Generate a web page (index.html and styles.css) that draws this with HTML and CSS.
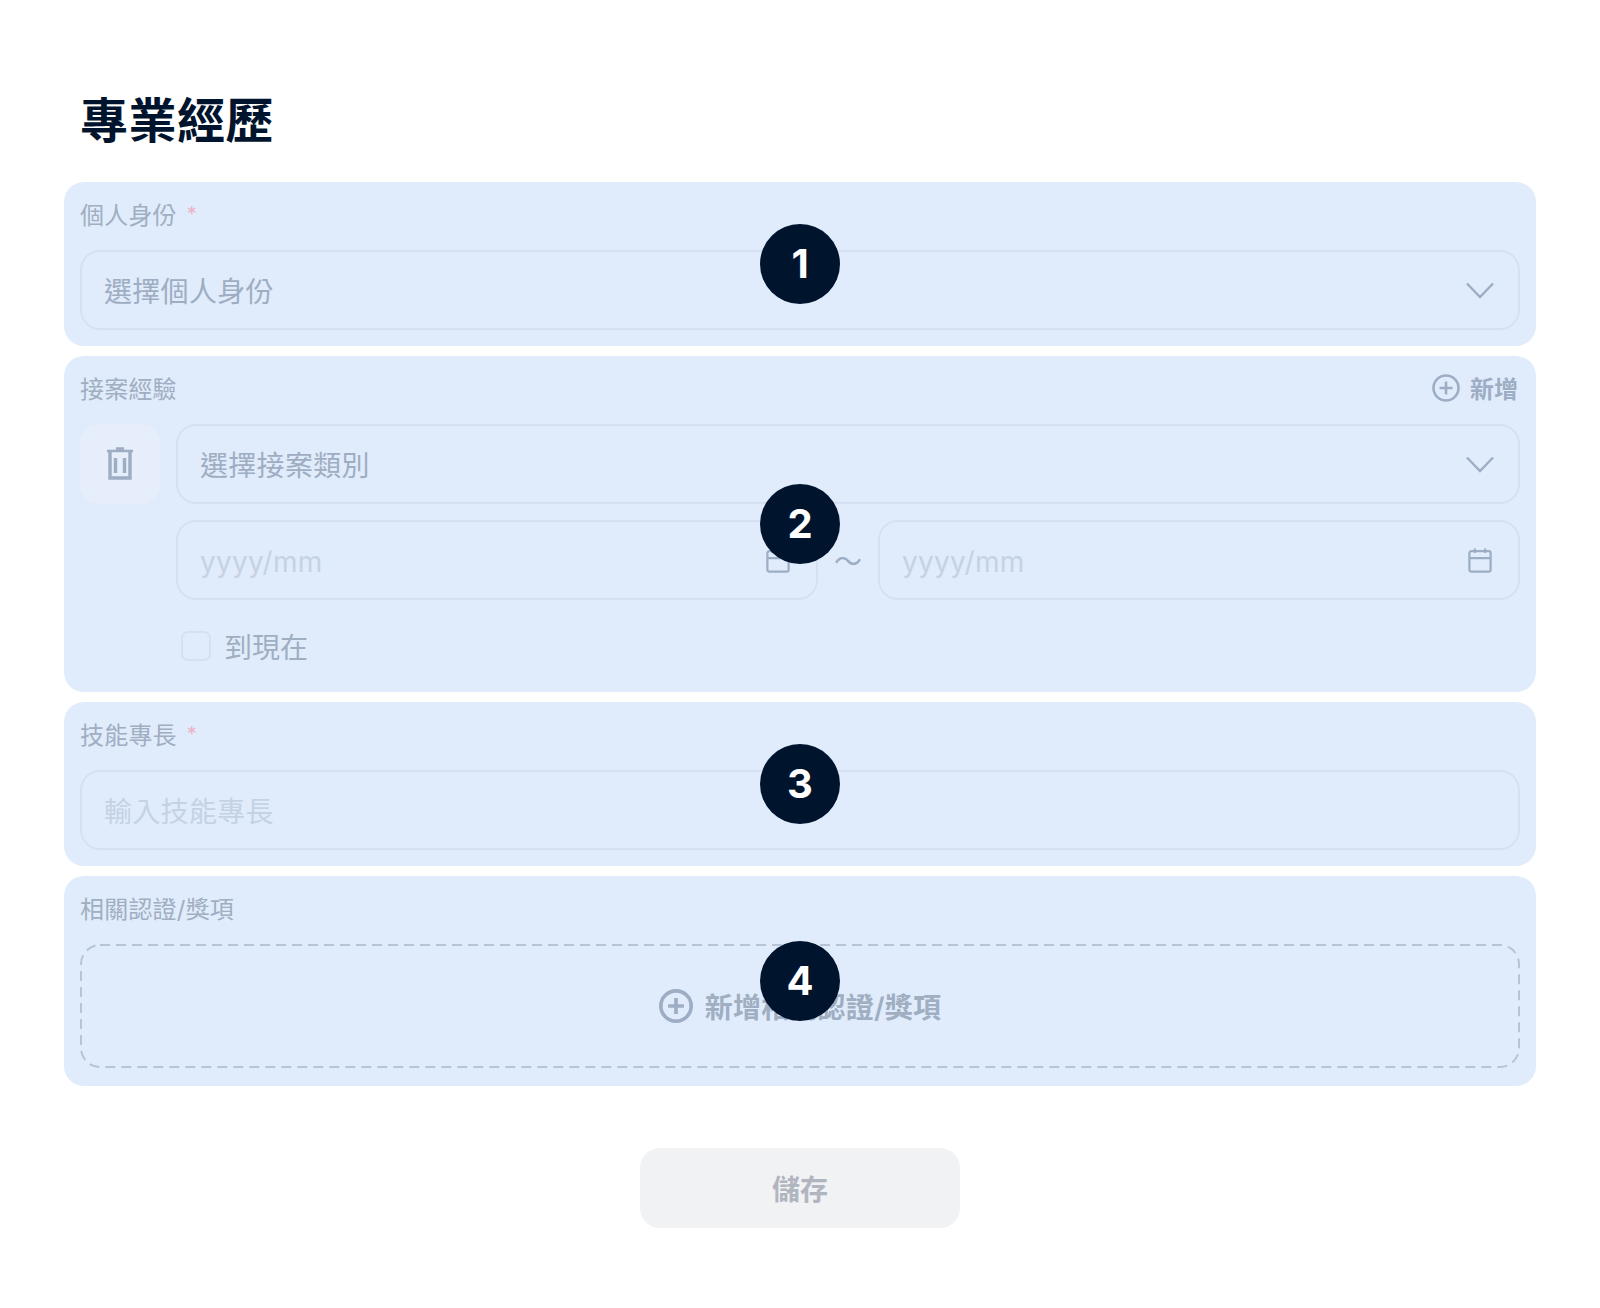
FILE: index.html
```html
<!DOCTYPE html>
<html lang="zh-Hant">
<head>
  <meta charset="UTF-8">
  <meta name="viewport" content="width=device-width, initial-scale=1.0">
  <title>專業經歷</title>
  <link rel="stylesheet" href="styles.css">
</head>
<body>
  <main class="page">
    <h1>專業經歷</h1>

    <div class="sections">
      <section class="block">
        <div class="label-row">
          <span class="label">個人身份<span class="req">*</span></span>
        </div>
        <div class="field">
          <span class="value">選擇個人身份</span>
          <svg class="chevron" viewBox="0 0 28 18"><path d="M1 1.500 14 15 27 1.500"/></svg>
        </div>
        <span class="marker">1</span>
      </section>

      <section class="block">
        <div class="label-row">
          <span class="label">接案經驗</span>
          <span class="add-link">
            <svg class="plus" viewBox="0 0 28 28"><circle cx="14" cy="14" r="12.500"/><path d="M14 7.500v13M7.500 14h13"/></svg>
            新增
          </span>
        </div>
        <div class="exp-row">
          <div class="trash">
            <svg viewBox="0 0 28 34"><path class="thin" d="M1 4h26M10 1.500h8"/><path d="M4 4v27h20V4M9.500 11v15M18.500 11v15"/></svg>
          </div>
          <div class="exp-fields">
            <div class="field">
              <span class="value">選擇接案類別</span>
              <svg class="chevron" viewBox="0 0 28 18"><path d="M1 1.500 14 15 27 1.500"/></svg>
            </div>
            <div class="date-row">
              <div class="field">
                <span class="value ghost date">yyyy/mm</span>
                <svg class="calendar" viewBox="0 0 26 28"><path d="M3.500 4.500h19a2 2 0 0 1 2 2v18a2 2 0 0 1-2 2h-19a2 2 0 0 1-2-2v-18a2 2 0 0 1 2-2zM1.500 12h23M7.500 1.500v5M18.500 1.500v5"/></svg>
              </div>
              <span class="tilde">～</span>
              <div class="field">
                <span class="value ghost date">yyyy/mm</span>
                <svg class="calendar" viewBox="0 0 26 28"><path d="M3.500 4.500h19a2 2 0 0 1 2 2v18a2 2 0 0 1-2 2h-19a2 2 0 0 1-2-2v-18a2 2 0 0 1 2-2zM1.500 12h23M7.500 1.500v5M18.500 1.500v5"/></svg>
              </div>
            </div>
            <label class="check">
              <span class="box"></span>
              到現在
            </label>
          </div>
        </div>
        <span class="marker">2</span>
      </section>

      <section class="block">
        <div class="label-row">
          <span class="label">技能專長<span class="req">*</span></span>
        </div>
        <div class="field">
          <span class="value ghost">輸入技能專長</span>
        </div>
        <span class="marker">3</span>
      </section>

      <section class="block">
        <div class="label-row">
          <span class="label">相關認證/獎項</span>
        </div>
        <div class="dropzone">
          <svg class="dash"><rect/></svg>
          <svg class="plus" viewBox="0 0 28 28"><circle cx="14" cy="14" r="12.500"/><path d="M14 7.500v13M7.500 14h13"/></svg>
          新增相關認證/獎項
        </div>
        <span class="marker">4</span>
      </section>
    </div>

    <div class="actions">
      <button class="save" type="button">儲存</button>
    </div>
  </main>
</body>
</html>
```

FILE: styles.css
```css
* {
  box-sizing: border-box;
}
body {
  margin: 0;
  background-color: #fff;
  font-family: Inter, "Noto Sans CJK TC", sans-serif;
  color: #94a3b8;
}
.page {
  height: 1308px;
  padding: 90px 64px 0;
}
h1 {
  margin: 0 0 30px 16px;
  font-size: 48px;
  line-height: 62px;
  font-weight: 700;
  letter-spacing: 0.5px;
  color: #00142d;
}
.sections {
  display: flex;
  flex-direction: column;
  gap: 10px;
}
.block {
  position: relative;
  padding: 16px;
  border-radius: 20px;
  background-color: #e0ecfc;
}
.label-row {
  display: flex;
  justify-content: space-between;
  align-items: center;
  height: 30px;
  margin-bottom: 22px;
}
.label {
  font-size: 24px;
  letter-spacing: 0.2px;
  color: #a0aec2;
}
.req {
  margin-left: 10px;
  font-size: 20px;
  vertical-align: 3px;
  color: #ecb2c8;
}
.field {
  display: flex;
  justify-content: space-between;
  align-items: center;
  height: 80px;
  padding: 0 24px 0 22px;
  border: 2px solid #d5e1f2;
  border-radius: 20px;
}
.value {
  font-size: 28px;
  letter-spacing: 0.3px;
  color: #9fadc2;
}
.ghost {
  color: #c5d2e4;
}
.date {
  margin-top: 4px;
}
.chevron {
  width: 28px;
  height: 18px;
  margin-top: 2px;
  fill: none;
  stroke: #9dadc4;
  stroke-width: 2.400;
}
.calendar {
  width: 24px;
  height: 26px;
  margin-right: 2px;
  fill: none;
  stroke: #9dadc4;
  stroke-width: 2.400;
}
.plus {
  fill: none;
  stroke: #9dadc4;
  stroke-width: 2.600;
}
.add-link {
  display: flex;
  align-items: center;
  gap: 10px;
  margin-right: 2px;
  font-size: 24px;
  font-weight: 600;
  color: #9dadc4;
}
.add-link .plus {
  width: 28px;
  height: 28px;
  margin-bottom: -2px;
}
.exp-row {
  display: flex;
  gap: 16px;
}
.trash {
  display: flex;
  justify-content: center;
  align-items: center;
  flex: none;
  width: 80px;
  height: 80px;
  border-radius: 20px;
  background-color: #e5eefa;
}
.trash svg {
  width: 28px;
  height: 34px;
  fill: none;
  stroke: #9dadc4;
  stroke-width: 3.400;
}
.trash .thin {
  stroke-width: 2.400;
}
.exp-fields {
  flex: 1;
  display: flex;
  flex-direction: column;
  gap: 16px;
}
.date-row {
  display: flex;
  align-items: center;
  gap: 16px;
}
.date-row .field {
  flex: 1;
}
.tilde {
  width: 28px;
  text-align: center;
  font-size: 28px;
  color: #9dadc4;
}
.check {
  display: flex;
  align-items: center;
  gap: 13px;
  height: 60px;
  padding-left: 5px;
  font-size: 28px;
  color: #a0aec2;
}
.box {
  width: 30px;
  height: 30px;
  border: 2px solid #d5e1f2;
  border-radius: 7px;
}
.dropzone {
  position: relative;
  display: flex;
  justify-content: center;
  align-items: center;
  gap: 12px;
  height: 124px;
  margin-bottom: 2px;
  font-size: 28px;
  font-weight: 600;
  letter-spacing: 0.2px;
  color: #a0aec2;
}
.dash {
  position: absolute;
  top: 0;
  left: 0;
  width: 100%;
  height: 100%;
  fill: none;
  stroke: #b6c4d8;
  stroke-width: 2;
  stroke-dasharray: 10 6;
}
.dash rect {
  x: 1px;
  y: 1px;
  width: calc(100% - 2px);
  height: calc(100% - 2px);
  rx: 19px;
}
.dropzone .plus {
  width: 34px;
  height: 34px;
  stroke-width: 3;
}
.marker {
  position: absolute;
  top: 50%;
  left: 50%;
  display: flex;
  justify-content: center;
  align-items: center;
  width: 80px;
  height: 80px;
  margin: -40px 0 0 -40px;
  padding-bottom: 2px;
  border-radius: 50%;
  background-color: #00142d;
  color: #fff;
  font-size: 40px;
  font-weight: 700;
}
.actions {
  display: flex;
  justify-content: center;
  margin-top: 62px;
}
.save {
  width: 320px;
  height: 80px;
  border: 0;
  border-radius: 20px;
  background-color: #f1f2f4;
  color: #b0b5bf;
  font-family: inherit;
  font-size: 28px;
  font-weight: 600;
}
```
